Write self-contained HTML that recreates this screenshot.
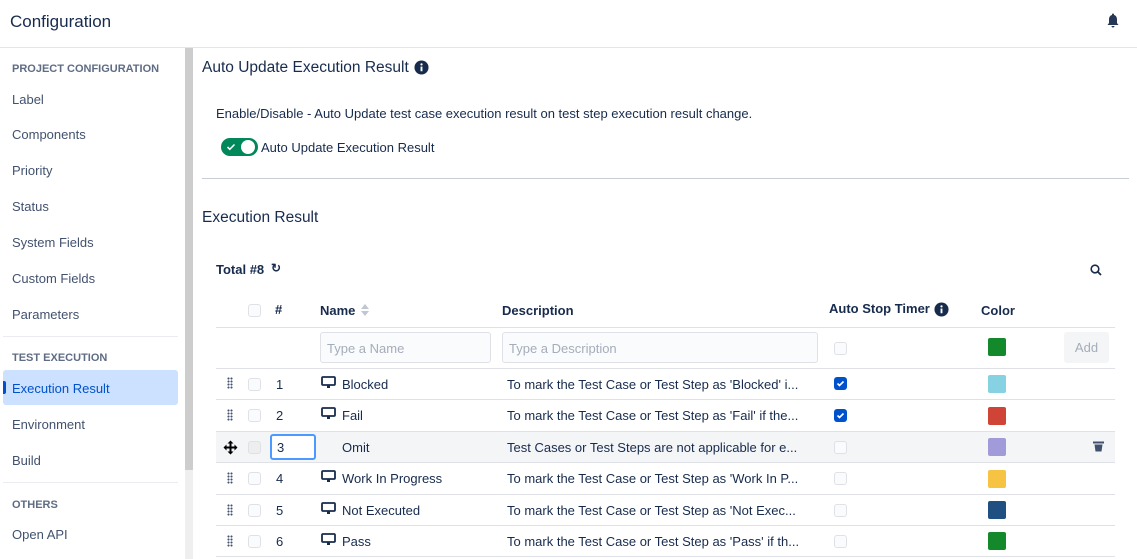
<!DOCTYPE html>
<html><head><style>
*{box-sizing:border-box;margin:0;padding:0}
body{width:1137px;height:559px;overflow:hidden;background:#fff;font-family:"Liberation Sans",sans-serif;color:#172b4d;position:relative;font-size:13px}
.a{position:absolute;white-space:nowrap}
.hd{font-size:11px;font-weight:bold;color:#5e6c84;letter-spacing:0}
.nav{font-size:13px;color:#42526e}
.line{position:absolute;height:1px;background:#dfe1e6}
.cb{position:absolute;width:13px;height:13px;border:1.5px solid #dfe1e6;border-radius:3px;background:#fafbfc}
.cbc{position:absolute;width:13px;height:13px;border-radius:3px;background:#0052cc}
.sw{position:absolute;width:18px;height:18px;border-radius:2px}
.th{font-weight:bold;font-size:13px;color:#172b4d}
.drag{position:absolute;width:6px;height:12px;background-image:radial-gradient(circle,#42526e 1px,transparent 1.1px);background-size:3px 3px}
</style></head><body>
<div class="a" style="left:10px;top:12px;font-size:17px;color:#172b4d">Configuration</div>
<svg class="a" style="left:1106px;top:13px" width="14" height="16" viewBox="0 0 14 16"><path d="M7 0.5c-0.6 0-1 .4-1 1v.5C3.8 2.5 3 4.5 3 6.5v3.5L1.5 12h11L11 10V6.5C11 4.5 10.2 2.5 8 2v-.5c0-.6-.4-1-1-1zM5.5 13h3c0 .9-.7 1.5-1.5 1.5S5.5 13.9 5.5 13z" fill="#253858"/></svg>
<div class="line" style="left:0;top:47px;width:1137px;background:#e4e5e7"></div>
<div class="a" style="left:185px;top:48px;width:8px;height:511px;background:#efefef"></div>
<div class="a" style="left:185px;top:48px;width:8px;height:422px;background:#cdcdcd"></div>
<div class="a hd" style="left:12px;top:63px">PROJECT CONFIGURATION</div>
<div class="a nav" style="left:12px;top:92px">Label</div>
<div class="a nav" style="left:12px;top:127px">Components</div>
<div class="a nav" style="left:12px;top:163px">Priority</div>
<div class="a nav" style="left:12px;top:199px">Status</div>
<div class="a nav" style="left:12px;top:235px">System Fields</div>
<div class="a nav" style="left:12px;top:271px">Custom Fields</div>
<div class="a nav" style="left:12px;top:307px">Parameters</div>
<div class="line" style="left:3px;top:336px;width:175px;background:#ebecf0"></div>
<div class="a hd" style="left:12px;top:352px">TEST EXECUTION</div>
<div class="a" style="left:3px;top:370px;width:175px;height:35px;background:#cce0ff;border-radius:3px"></div>
<div class="a" style="left:3px;top:381px;width:3px;height:13px;background:#0052cc;border-radius:0 2px 2px 0"></div>
<div class="a nav" style="left:12px;top:381px;color:#0052cc">Execution Result</div>
<div class="a nav" style="left:12px;top:417px">Environment</div>
<div class="a nav" style="left:12px;top:453px">Build</div>
<div class="line" style="left:3px;top:482px;width:175px;background:#ebecf0"></div>
<div class="a hd" style="left:12px;top:499px">OTHERS</div>
<div class="a nav" style="left:12px;top:527px">Open API</div>

<div class="a" style="left:202px;top:59px;font-size:15.5px">Auto Update Execution Result</div>
<svg class="a" style="left:414px;top:60px" width="15" height="15" viewBox="0 0 16 16"><circle cx="8" cy="8" r="7.5" fill="#172b4d"/><rect x="7" y="7" width="2" height="5" fill="#fff"/><circle cx="8" cy="4.7" r="1.2" fill="#fff"/></svg>
<div class="a" style="left:216px;top:106px;font-size:13px">Enable/Disable - Auto Update test case execution result on test step execution result change.</div>
<div class="a" style="left:221px;top:138px;width:37px;height:18px;border-radius:9px;background:#00875a"></div>
<div class="a" style="left:241px;top:140px;width:14px;height:14px;border-radius:7px;background:#fff"></div>
<svg class="a" style="left:226px;top:142px" width="10" height="10" viewBox="0 0 10 10"><path d="M1.5 5l2.3 2.3L8.5 2.5" stroke="#fff" stroke-width="1.6" fill="none"/></svg>
<div class="a" style="left:261px;top:140px;font-size:13px">Auto Update Execution Result</div>
<div class="line" style="left:202px;top:178px;width:927px;background:#c9cdd4"></div>
<div class="a" style="left:202px;top:209px;font-size:15.5px">Execution Result</div>
<div class="a" style="left:216px;top:262px;font-weight:bold;font-size:13px">Total #8</div>
<div class="a" style="left:271px;top:261px;font-size:12px;font-weight:bold">&#x21BB;</div>
<svg class="a" style="left:1090px;top:264px" width="12" height="12" viewBox="0 0 12 12"><circle cx="5" cy="5" r="3.8" stroke="#172b4d" stroke-width="1.6" fill="none"/><path d="M8 8l3 3" stroke="#172b4d" stroke-width="1.8"/></svg>

<div class="cb" style="left:248px;top:304px"></div>
<div class="a th" style="left:275px;top:302px">#</div>
<div class="a th" style="left:320px;top:303px">Name</div>
<svg class="a" style="left:360px;top:303px" width="10" height="14" viewBox="0 0 10 14"><path d="M5 1l4 5H1z M5 13l4-5H1z" fill="#c1c7d0"/></svg>
<div class="a th" style="left:502px;top:303px">Description</div>
<div class="a th" style="left:829px;top:301px">Auto Stop Timer</div>
<svg class="a" style="left:934px;top:302px" width="15" height="15" viewBox="0 0 16 16"><circle cx="8" cy="8" r="7.5" fill="#172b4d"/><rect x="7" y="7" width="2" height="5" fill="#fff"/><circle cx="8" cy="4.7" r="1.2" fill="#fff"/></svg>
<div class="a th" style="left:981px;top:303px">Color</div>
<div class="line" style="left:216px;top:327px;width:899px"></div>
<div class="a" style="left:320px;top:332px;width:171px;height:31px;border:1px solid #dfe1e6;border-radius:3px;background:#fafbfc;padding:8px 6px;color:#a5adba">Type a Name</div>
<div class="a" style="left:502px;top:332px;width:316px;height:31px;border:1px solid #dfe1e6;border-radius:3px;background:#fafbfc;padding:8px 6px;color:#a5adba">Type a Description</div>
<div class="cb" style="left:834px;top:342px"></div>
<div class="sw" style="left:988px;top:338px;background:#14892c"></div>
<div class="a" style="left:1064px;top:332px;width:45px;height:31px;border-radius:3px;background:#f4f5f7;color:#a5adba;text-align:center;line-height:31px">Add</div>
<div class="line" style="left:216px;top:368px;width:899px"></div>

<div class="a" style="left:216px;top:432px;width:899px;height:30px;background:#f4f5f7"></div>

<div class="drag" style="left:227px;top:377px"></div><div class="cb" style="left:248px;top:378px"></div>
<div class="a" style="left:276px;top:377px">1</div>
<svg class="a" style="left:321px;top:376px" width="15" height="13" viewBox="0 0 15 13"><rect x="1" y="1" width="13" height="8" rx="1" stroke="#172b4d" stroke-width="1.8" fill="none"/><rect x="6" y="9" width="3" height="3" fill="#172b4d"/></svg>
<div class="a" style="left:342px;top:377px">Blocked</div>
<div class="a" style="left:507px;top:377px">To mark the Test Case or Test Step as 'Blocked' i...</div>
<div class="cbc" style="left:834px;top:377px"></div><svg class="a" style="left:834px;top:377px" width="13" height="13" viewBox="0 0 13 13"><path d="M3.5 6.5l2 2 4-4" stroke="#fff" stroke-width="1.6" fill="none"/></svg>
<div class="sw" style="left:988px;top:375px;background:#87d2e2"></div>
<div class="line" style="left:216px;top:399px;width:899px"></div>

<div class="drag" style="left:227px;top:409px"></div><div class="cb" style="left:248px;top:409px"></div>
<div class="a" style="left:276px;top:408px">2</div>
<svg class="a" style="left:321px;top:407px" width="15" height="13" viewBox="0 0 15 13"><rect x="1" y="1" width="13" height="8" rx="1" stroke="#172b4d" stroke-width="1.8" fill="none"/><rect x="6" y="9" width="3" height="3" fill="#172b4d"/></svg>
<div class="a" style="left:342px;top:408px">Fail</div>
<div class="a" style="left:507px;top:408px">To mark the Test Case or Test Step as 'Fail' if the...</div>
<div class="cbc" style="left:834px;top:409px"></div><svg class="a" style="left:834px;top:409px" width="13" height="13" viewBox="0 0 13 13"><path d="M3.5 6.5l2 2 4-4" stroke="#fff" stroke-width="1.6" fill="none"/></svg>
<div class="sw" style="left:988px;top:407px;background:#d04437"></div>
<div class="line" style="left:216px;top:431px;width:899px"></div>

<svg class="a" style="left:223px;top:440px" width="15" height="15" viewBox="0 0 15 15"><path d="M7.5 0.5l3 3h-2v3h3v-2l3 3-3 3v-2h-3v3h2l-3 3-3-3h2v-3h-3v2l-3-3 3-3v2h3v-3h-2z" fill="#000"/></svg>
<div class="cb" style="left:248px;top:441px;background:#eee"></div>
<div class="a" style="left:270px;top:434px;width:46px;height:26px;border:2px solid #4c9aff;border-radius:3px;background:#fff;padding:4px 5px">3</div>
<div class="a" style="left:342px;top:440px">Omit</div>
<div class="a" style="left:507px;top:440px">Test Cases or Test Steps are not applicable for e...</div>
<div class="cb" style="left:834px;top:441px"></div>
<div class="sw" style="left:988px;top:438px;background:#a29bd9"></div>
<svg class="a" style="left:1093px;top:441px" width="11" height="11" viewBox="0 0 11 11"><rect x="0" y="0.5" width="11" height="2" fill="#42526e"/><path d="M1.5 3.5h8l-1 7h-6z" fill="#42526e"/></svg>
<div class="line" style="left:216px;top:462px;width:899px"></div>

<div class="drag" style="left:227px;top:472px"></div><div class="cb" style="left:248px;top:472px"></div>
<div class="a" style="left:276px;top:471px">4</div>
<svg class="a" style="left:321px;top:470px" width="15" height="13" viewBox="0 0 15 13"><rect x="1" y="1" width="13" height="8" rx="1" stroke="#172b4d" stroke-width="1.8" fill="none"/><rect x="6" y="9" width="3" height="3" fill="#172b4d"/></svg>
<div class="a" style="left:342px;top:471px">Work In Progress</div>
<div class="a" style="left:507px;top:471px">To mark the Test Case or Test Step as 'Work In P...</div>
<div class="cb" style="left:834px;top:472px"></div>
<div class="sw" style="left:988px;top:470px;background:#f6c342"></div>
<div class="line" style="left:216px;top:494px;width:899px"></div>

<div class="drag" style="left:227px;top:504px"></div><div class="cb" style="left:248px;top:504px"></div>
<div class="a" style="left:276px;top:503px">5</div>
<svg class="a" style="left:321px;top:502px" width="15" height="13" viewBox="0 0 15 13"><rect x="1" y="1" width="13" height="8" rx="1" stroke="#172b4d" stroke-width="1.8" fill="none"/><rect x="6" y="9" width="3" height="3" fill="#172b4d"/></svg>
<div class="a" style="left:342px;top:503px">Not Executed</div>
<div class="a" style="left:507px;top:503px">To mark the Test Case or Test Step as 'Not Exec...</div>
<div class="cb" style="left:834px;top:504px"></div>
<div class="sw" style="left:988px;top:501px;background:#205081"></div>
<div class="line" style="left:216px;top:525px;width:899px"></div>

<div class="drag" style="left:227px;top:535px"></div><div class="cb" style="left:248px;top:535px"></div>
<div class="a" style="left:276px;top:534px">6</div>
<svg class="a" style="left:321px;top:533px" width="15" height="13" viewBox="0 0 15 13"><rect x="1" y="1" width="13" height="8" rx="1" stroke="#172b4d" stroke-width="1.8" fill="none"/><rect x="6" y="9" width="3" height="3" fill="#172b4d"/></svg>
<div class="a" style="left:342px;top:534px">Pass</div>
<div class="a" style="left:507px;top:534px">To mark the Test Case or Test Step as 'Pass' if th...</div>
<div class="cb" style="left:834px;top:535px"></div>
<div class="sw" style="left:988px;top:532px;background:#14892c"></div>
<div class="line" style="left:216px;top:556px;width:899px"></div>
</body></html>
